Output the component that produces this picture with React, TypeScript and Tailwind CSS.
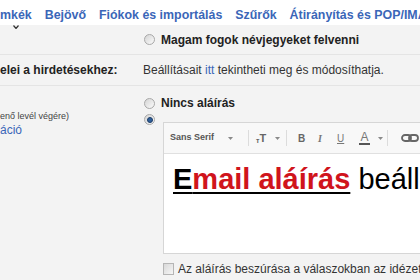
import React from "react";

const Radio = ({ checked = false }: { checked?: boolean }) => (
  <div className="w-[11px] h-[11px] rounded-full border border-[#a8a8a8] bg-gradient-to-br from-[#d4d4d4] to-[#fbfbfb] flex items-center justify-center shrink-0">
    {checked && (
      <div className="w-[6px] h-[6px] rounded-full bg-[#2f5f9a] border border-[#1d3c66]" />
    )}
  </div>
);

const Caret = () => (
  <svg width="5" height="3" viewBox="0 0 5 3" className="shrink-0">
    <path d="M0 0h5L2.5 3z" fill="#8a8a8a" />
  </svg>
);

const Sep = () => <div className="w-px h-[16px] bg-[#dcdcdc] shrink-0" />;

export default function App() {
  return (
    <div
      className="w-[420px] h-[280px] overflow-hidden bg-[#f3f3f3] text-[#222] flex flex-col"
      style={{ fontFamily: '"Liberation Sans", Arial, sans-serif' }}
    >
      {/* tabs */}
      <div className="h-[25px] bg-white flex items-center gap-[13px] pt-[5px] text-[12.4px] font-bold text-[#3a66b8] whitespace-nowrap shrink-0">
        <span>mkék</span>
        <span>Bejövő</span>
        <span>Fiókok és importálás</span>
        <span>Szűrők</span>
        <span>Átirányítás és POP/IMAP</span>
      </div>

      {/* row 1 */}
      <div className="h-[30px] flex items-center border-b border-[#e4e4e4] shrink-0">
        <div className="w-[144px] shrink-0 self-start pl-[13px]">
          <svg width="6" height="4" viewBox="0 0 6 4">
            <path d="M0.5 0.5L3 3.5L5.5 0.5" fill="none" stroke="#333" strokeWidth="1.2" />
          </svg>
        </div>
        <div className="flex items-center gap-[6px]">
          <Radio />
          <span className="text-[12px] font-bold">Magam fogok névjegyeket felvenni</span>
        </div>
      </div>

      {/* row 2 */}
      <div className="h-[31px] flex items-center border-b border-[#e4e4e4] shrink-0 text-[12px] whitespace-nowrap">
        <div className="w-[143px] shrink-0 font-bold">elei a hirdetésekhez:</div>
        <div className="text-[#333]">
          Beállításait <span className="text-[#3a66b8]">itt</span> tekintheti meg és módosíthatja.
        </div>
      </div>

      {/* row 3 */}
      <div className="flex flex-1 min-h-0 whitespace-nowrap">
        <div className="w-[144px] shrink-0 pt-[25px] flex flex-col">
          <span className="text-[9px] leading-[11px] text-[#444]">enő levél végére)</span>
          <span className="text-[12px] leading-[14px] mt-[1px] text-[#3a66b8]">áció</span>
        </div>
        <div className="flex flex-col flex-1 min-w-0 pt-[10px]">
          <div className="flex items-center gap-[6px] h-[14px]">
            <Radio />
            <span className="text-[12px] font-bold">Nincs aláírás</span>
          </div>
          <div className="flex gap-[8px] mt-[4px]">
            <Radio checked />
            <div className="flex flex-col flex-1 min-w-0 mt-[8px]">
              <div className="border border-r-0 border-[#d6d6d6] bg-white w-[300px]">
                {/* toolbar */}
                <div className="h-[31px] bg-[#f8f8f8] border-b border-[#e0e0e0] flex items-center pl-[6px] text-[#666]">
                  <span className="w-[42px] text-[9px] font-bold text-[#555]">Sans Serif</span>
                  <div className="ml-[16px]"><Caret /></div>
                  <div className="ml-[15px]"><Sep /></div>
                  <div className="ml-[7px] w-[12px] flex items-end font-bold text-[#666] leading-none">
                    <span className="text-[7px]">т</span>
                    <span className="text-[11px]">T</span>
                  </div>
                  <div className="ml-[7px]"><Caret /></div>
                  <div className="ml-[6px]"><Sep /></div>
                  <span className="ml-[11px] w-[7px] text-[10px] font-bold text-[#666]">B</span>
                  <span className="ml-[13px] w-[6px] text-[10px] italic font-bold text-[#777]" style={{ fontFamily: '"Liberation Serif", serif' }}>I</span>
                  <span className="ml-[13px] w-[7px] text-[10px] underline text-[#777]">U</span>
                  <div className="ml-[15px] w-[11px] flex flex-col items-center">
                    <span className="text-[12px] leading-[11px] text-[#777]">A</span>
                    <div className="w-[11px] h-[2px] bg-[#555]" />
                  </div>
                  <div className="ml-[8px]"><Caret /></div>
                  <div className="ml-[4px]"><Sep /></div>
                  <svg className="ml-[13px] shrink-0" width="20" height="8" viewBox="0 0 20 8">
                    <rect x="1" y="1" width="9" height="6" rx="3" fill="none" stroke="#666" strokeWidth="1.8" />
                    <rect x="8" y="1" width="9" height="6" rx="3" fill="none" stroke="#666" strokeWidth="1.8" />
                  </svg>
                </div>
                {/* body */}
                <div className="h-[99px] pl-[9px] pt-[11px]">
                  <div className="text-[29px] leading-[29px] text-black">
                    <span className="font-bold underline decoration-2 underline-offset-[3px]">
                      E<span className="text-[#d0141c]">mail aláírás</span>
                    </span>{" "}
                    beállítása
                  </div>
                </div>
              </div>
              <div className="flex items-center gap-[4px] mt-[8px] h-[14px]">
                <div className="w-[11px] h-[12px] border border-[#b5b5b5] bg-gradient-to-br from-[#d8d8d8] to-[#f6f6f6] shrink-0" />
                <span className="text-[12px] text-[#333]">Az aláírás beszúrása a válaszokban az idézett szöveg előtt</span>
              </div>
            </div>
          </div>
        </div>
      </div>
    </div>
  );
}
